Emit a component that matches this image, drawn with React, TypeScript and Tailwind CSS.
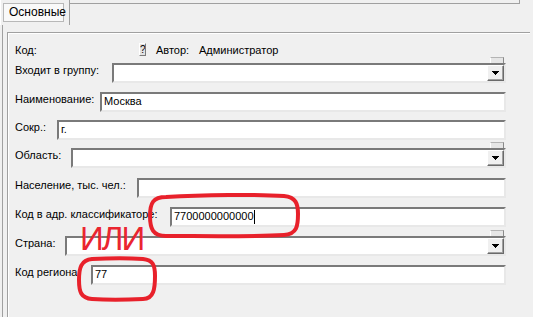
import React from "react";

const sunken =
  "border-2 border-t-[#7a7a7a] border-l-[#7a7a7a] border-b-[#e8e8e8] border-r-[#e8e8e8] bg-white";

function Label({ w, text }: { w: number; text: string }) {
  return (
    <div
      className="shrink-0 self-start leading-[15px] whitespace-nowrap overflow-hidden"
      style={{ width: w }}
    >
      {text}
    </div>
  );
}

function Input({ value, caret }: { value?: string; caret?: boolean }) {
  return (
    <div className={`flex-1 h-[20px] ${sunken} pl-[2px] leading-[15px] flex items-start`}>
      <span>{value}</span>
      {caret && <span className="inline-block w-[1px] h-[14px] bg-black mt-[1px]" />}
    </div>
  );
}

function Combo({ tab }: { tab?: boolean }) {
  return (
    <div className={`relative flex-1 h-[20px] ${sunken} flex`}>
      {tab && (
        <div className="absolute right-[0px] top-[-8px] w-[14px] h-[6px] bg-[#e6e6e6] border-t border-t-[#b4b4b4] border-r border-r-[#8a8a8a] border-l border-l-white" />
      )}
      <div className="flex-1" />
      <div className="w-[17px] h-full bg-[#f0f0f0] border border-t-white border-l-white border-b-[#6a6a6a] border-r-[#6a6a6a] shadow-[inset_-1px_-1px_0_#a0a0a0] flex items-center justify-center">
        <svg width="7" height="4" viewBox="0 0 7 4" shapeRendering="crispEdges">
          <rect x="0" y="0" width="7" height="1" fill="#000" />
          <rect x="1" y="1" width="5" height="1" fill="#000" />
          <rect x="2" y="2" width="3" height="1" fill="#000" />
          <rect x="3" y="3" width="1" height="1" fill="#000" />
        </svg>
      </div>
    </div>
  );
}

export default function App() {
  return (
    <div className="w-[533px] h-[317px] bg-[#f0f0f0] relative overflow-hidden font-['Liberation_Sans',Arial,sans-serif] text-[11px] text-black">
      {/* tab strip */}
      <div className="flex h-[25px]">
        <div className="w-[70px] h-[25px] border-r border-[#a0a0a0] border-l border-l-white pt-[3px] pl-[2px]">
          <div className="w-[61px] h-[19px] border border-[#b8b8b8] bg-[#f9f9f9] pl-[5px] text-[12px] leading-[17px]">
            Основные
          </div>
        </div>
        <div className="w-[450px] h-[4px] border-b border-r border-[#a0a0a0]" />
      </div>

      {/* page panel */}
      <div className="ml-[2px] h-[292px] border-l border-[#a0a0a0] pl-[4px] pt-[7px]">
        <div className="w-[523px] h-full border-t border-l border-[#a0a0a0] shadow-[inset_1px_1px_0_#ffffff] pl-[7px] pr-[24px] pt-[10px] flex flex-col">
          {/* Код row */}
          <div className="flex items-start h-[20px]">
            <div className="w-[124px] leading-[15px]">Код:</div>
            <div className="w-[7px] h-[13px] bg-[#e2e2e2] border border-t-white border-l-white border-b-[#7a7a7a] border-r-[#7a7a7a] text-[10px] leading-[11px] text-center overflow-hidden">
              ?
            </div>
            <div className="ml-[10px] w-[43px] leading-[15px]">Автор:</div>
            <div className="leading-[15px]">Администратор</div>
          </div>

          <div className="flex">
            <Label w={97} text="Входит в группу:" />
            <Combo tab />
          </div>

          <div className="flex mt-[9px]">
            <Label w={85} text="Наименование:" />
            <Input value="Москва" />
          </div>

          <div className="flex mt-[8px]">
            <Label w={42} text="Сокр.:" />
            <Input value="г." />
          </div>

          <div className="flex mt-[8px]">
            <Label w={56} text="Область:" />
            <Combo tab />
          </div>

          <div className="flex mt-[10px]">
            <Label w={122} text="Население, тыс. чел.:" />
            <Input />
          </div>

          <div className="flex mt-[9px]">
            <Label w={155} text="Код в адр. классификаторе:" />
            <Input value="7700000000000" caret />
          </div>

          <div className="flex mt-[9px]">
            <Label w={50} text="Страна:" />
            <Combo tab />
          </div>

          <div className="flex mt-[9px]">
            <Label w={76} text="Код региона:" />
            <Input value="77" />
          </div>
        </div>
      </div>

      {/* red annotations */}
      <svg
        className="absolute left-0 top-0 pointer-events-none"
        width="533"
        height="317"
        viewBox="0 0 533 317"
      >
        <path
          d="M166 197 C 200 195, 260 194, 284 196 C 296 197, 298 204, 298 214 C 298 226, 297 234, 284 235 C 250 237, 200 236, 166 236 C 153 236, 150 229, 150 216 C 150 203, 153 197, 166 197 Z"
          fill="none"
          stroke="#e8212b"
          strokeWidth="4"
        />
        <path
          d="M92 259 C 110 258, 130 258, 143 259 C 153 260, 155 265, 155 276 C 155 288, 154 299, 143 299 C 125 300, 105 300, 92 299 C 81 298, 79 292, 79 280 C 79 268, 81 260, 92 259 Z"
          fill="none"
          stroke="#e8212b"
          strokeWidth="4"
        />
      </svg>
      <div className="absolute left-[80px] top-[222px] text-[33px] leading-[33px] text-[#ea2530] font-['Liberation_Sans',Arial,sans-serif] tracking-[-2px]">
        ИЛИ
      </div>
    </div>
  );
}
